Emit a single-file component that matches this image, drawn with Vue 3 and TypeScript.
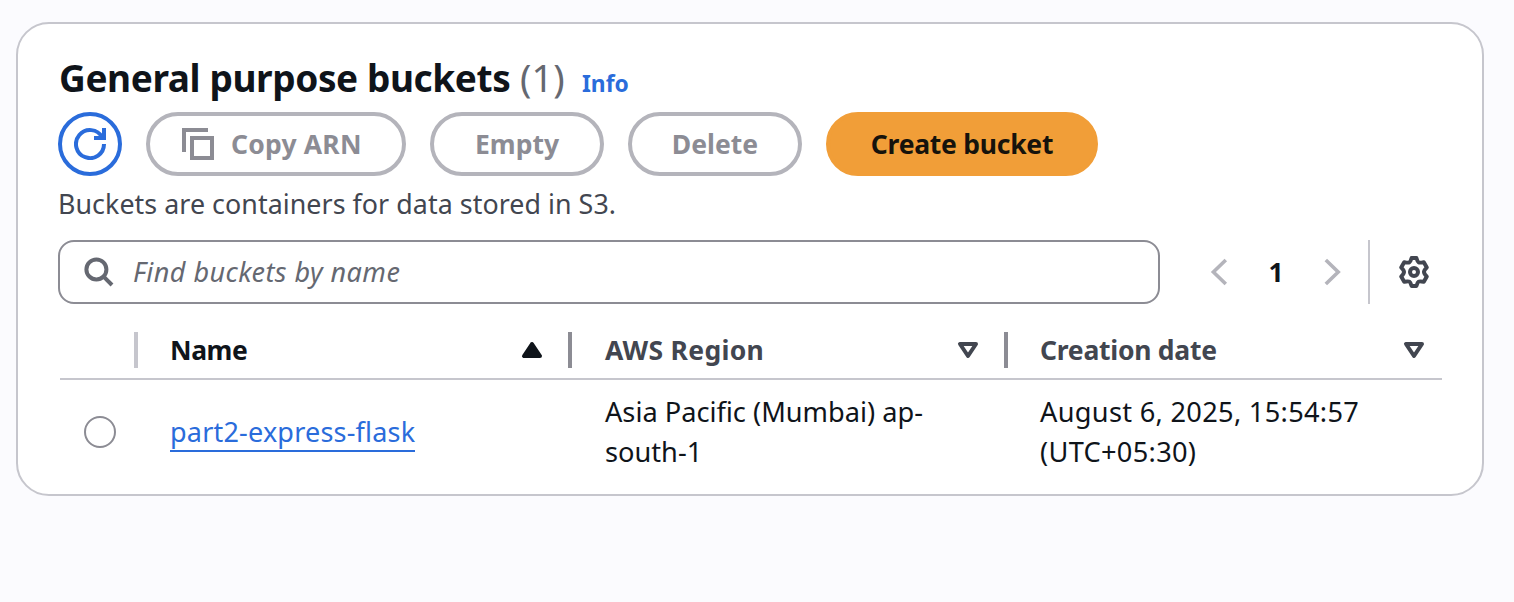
<script setup lang="ts">
interface Column {
  key: string
  label: string
  sorted: boolean
}

interface Bucket {
  name: string
  region: string
  created: string
}

const columns: Column[] = [
  { key: 'name', label: 'Name', sorted: true },
  { key: 'region', label: 'AWS Region', sorted: false },
  { key: 'created', label: 'Creation date', sorted: false },
]

const buckets: Bucket[] = [
  {
    name: 'part2-express-flask',
    region: 'Asia Pacific (Mumbai) ap-south-1',
    created: 'August 6, 2025, 15:54:57 (UTC+05:30)',
  },
]
</script>

<template>
  <main class="page">
    <section class="card">
      <header class="title-row">
        <h2 class="title">General purpose buckets</h2>
        <span class="count">({{ buckets.length }})</span>
        <a class="info">Info</a>
      </header>

      <div class="actions">
        <button class="btn btn-round" aria-label="Refresh">
          <svg class="icon" viewBox="0 0 16 16">
            <path d="M15 8a7 7 0 1 1-.9-3.4" />
            <path d="M10 5h5V0" />
          </svg>
        </button>
        <button class="btn btn-copy">
          <svg class="icon" viewBox="0 0 16 16">
            <path d="M1 12V1h12" />
            <path d="M5 5h10v10H5z" />
          </svg>
          <span>Copy ARN</span>
        </button>
        <button class="btn btn-small">Empty</button>
        <button class="btn btn-small">Delete</button>
        <button class="btn btn-primary">Create bucket</button>
      </div>

      <p class="description">Buckets are containers for data stored in S3.</p>

      <div class="tools">
        <div class="search">
          <svg class="icon" viewBox="0 0 16 16">
            <circle cx="6.7" cy="6.7" r="5" />
            <path d="m10.3 10.3 4.2 4.2" />
          </svg>
          <span class="placeholder">Find buckets by name</span>
        </div>
        <nav class="pager">
          <svg class="icon arrow" viewBox="0 0 16 16"><path d="M11.4 2 5.2 8l6.2 6" /></svg>
          <span class="page-number">1</span>
          <svg class="icon arrow" viewBox="0 0 16 16"><path d="m4.4 2 6.2 6-6.2 6" /></svg>
        </nav>
        <span class="divider"></span>
        <svg class="icon gear" viewBox="0 0 16 16">
          <path d="M6.8 1h2.4q.6 1.900 1.100 2.200t2.600-.1l1.500 2.600Q13 7.200 13 8t1.400 2.300l-1.500 2.600q-2.100-.4-2.600-.1T9.200 15H6.800q-.6-1.900-1.100-2.200t-2.600.1l-1.500-2.600Q3 8.800 3 8T1.600 5.700l1.500-2.600q2.100.4 2.600.1T6.800 1z" />
          <circle cx="8" cy="8" r="2" />
        </svg>
      </div>

      <div class="table">
        <div class="row head">
          <div class="cell select-head"></div>
          <div
            v-for="column in columns"
            :key="column.key"
            class="cell column"
            :class="[column.key, { sorted: column.sorted }]"
          >
            <span class="label">{{ column.label }}</span>
            <svg class="icon caret" viewBox="0 0 16 16">
              <path v-if="column.sorted" class="solid" d="M4 11h8L8 5z" />
              <path v-else d="M4 5h8l-4 6z" />
            </svg>
          </div>
        </div>
        <div v-for="bucket in buckets" :key="bucket.name" class="row body">
          <div class="cell select"><span class="radio"></span></div>
          <div class="cell"><a class="link">{{ bucket.name }}</a></div>
          <div class="cell region-text">{{ bucket.region }}</div>
          <div class="cell created-text">{{ bucket.created }}</div>
        </div>
      </div>
    </section>
  </main>
</template>

<style>
body {
  margin: 0;
  background: #fbfbfe;
}
</style>

<style scoped>
.page {
  box-sizing: border-box;
  height: 602px;
  padding: 22px 30px 0 16px;
  overflow: hidden;
  background: #fbfbfe;
  color: #0f141a;
  font-family: "Noto Sans", "Open Sans", sans-serif;
  font-size: 26.5px;
  line-height: 40px;
}
.card {
  box-sizing: border-box;
  height: 474px;
  padding: 30px 40px 0;
  border: 2px solid #c6c6cd;
  border-radius: 33px;
  background: #fff;
}
.title-row {
  display: flex;
  align-items: baseline;
  height: 58px;
  padding-left: 1px;
  line-height: 46px;
  white-space: nowrap;
}
.title {
  width: 461px;
  margin: 0;
  font-size: 37px;
  font-weight: 700;
  letter-spacing: -0.4px;
}
.count {
  width: 62px;
  color: #656871;
  font-size: 38px;
}
.info {
  color: #2a6cdb;
  font-size: 22.8px;
  font-weight: 700;
}
.icon {
  flex: none;
  width: 32px;
  height: 32px;
  fill: none;
  stroke: currentColor;
  stroke-width: 2;
}
.actions {
  display: flex;
  gap: 24px;
}
.btn {
  display: flex;
  box-sizing: border-box;
  align-items: center;
  justify-content: center;
  height: 64px;
  padding: 0;
  border: 4px solid #b4b4bb;
  border-radius: 32px;
  background: #fff;
  color: #8c8c94;
  font: inherit;
  font-weight: 700;
  white-space: nowrap;
}
.btn-round {
  width: 64px;
  border-color: #2a6cdb;
  color: #2a6cdb;
}
.btn-copy {
  gap: 17px;
  justify-content: flex-start;
  width: 260px;
  padding-left: 32px;
  letter-spacing: 0.2px;
}
.btn-small {
  width: 174px;
}
.btn-primary {
  width: 272px;
  border-color: #f19e38;
  background: #f19e38;
  color: #16130c;
  letter-spacing: -0.25px;
}
.description {
  height: 40px;
  margin: 8px 0 16px;
  color: #424650;
  font-size: 26.8px;
  letter-spacing: 0.06px;
  white-space: nowrap;
}
.tools {
  display: flex;
  align-items: center;
  height: 64px;
}
.search {
  display: flex;
  box-sizing: border-box;
  align-items: center;
  gap: 18px;
  width: 1102px;
  height: 64px;
  padding-left: 23px;
  border: 2px solid #8c8c94;
  border-radius: 16px;
  color: #656871;
}
.placeholder {
  font-size: 27px;
  font-style: italic;
  letter-spacing: 0.45px;
}
.pager {
  display: flex;
  align-items: center;
  justify-content: space-between;
  width: 146px;
  margin-left: 43px;
}
.arrow {
  color: #b4b4bb;
  stroke-width: 1.8;
}
.page-number {
  font-weight: 700;
}
.divider {
  width: 2px;
  height: 64px;
  margin: 0 28px 0 19px;
  background: #c6c6cd;
}
.gear {
  color: #424650;
  stroke-linejoin: round;
}
.table {
  margin: 18px 0 0 2px;
}
.row {
  display: grid;
  grid-template-columns: 78px 434px 436px 434px;
  width: 1382px;
}
.head {
  box-sizing: border-box;
  height: 58px;
  border-bottom: 2px solid #c6c6cd;
  color: #424650;
  font-weight: 700;
}
.select-head,
.head .name,
.head .region {
  position: relative;
}
.select-head::after,
.head .name::after,
.head .region::after {
  position: absolute;
  top: 10px;
  right: 0;
  width: 4px;
  height: 36px;
  background: #8c8c94;
  content: "";
}
.select-head::after {
  background: #c6c6cd;
}
.column {
  display: flex;
  align-items: center;
  justify-content: space-between;
  padding: 0 24px 0 32px;
}
.name .label {
  letter-spacing: -0.4px;
}
.region {
  padding-left: 33px;
}
.region .label {
  letter-spacing: 0.3px;
}
.created {
  padding-right: 12px;
}
.created .label {
  letter-spacing: -0.25px;
}
.sorted {
  color: #0f141a;
}
.solid {
  fill: currentColor;
}
.caret {
  stroke-linejoin: round;
}
.body {
  align-items: center;
  height: 104px;
}
.body .cell {
  padding-left: 32px;
}
.body .select {
  display: flex;
  padding-left: 24px;
}
.radio {
  box-sizing: border-box;
  width: 32px;
  height: 32px;
  border: 2px solid #8c8c94;
  border-radius: 50%;
}
.link {
  display: block;
  box-sizing: border-box;
  width: max-content;
  height: 40px;
  border-bottom: 2px solid #2a6cdb;
  color: #2a6cdb;
  font-size: 27px;
  letter-spacing: 0.2px;
  white-space: nowrap;
}
.body .region-text {
  padding: 0 60px 0 33px;
  font-size: 27.2px;
}
.body .created-text {
  padding-right: 60px;
  font-size: 27.2px;
  letter-spacing: 0.3px;
}
</style>
